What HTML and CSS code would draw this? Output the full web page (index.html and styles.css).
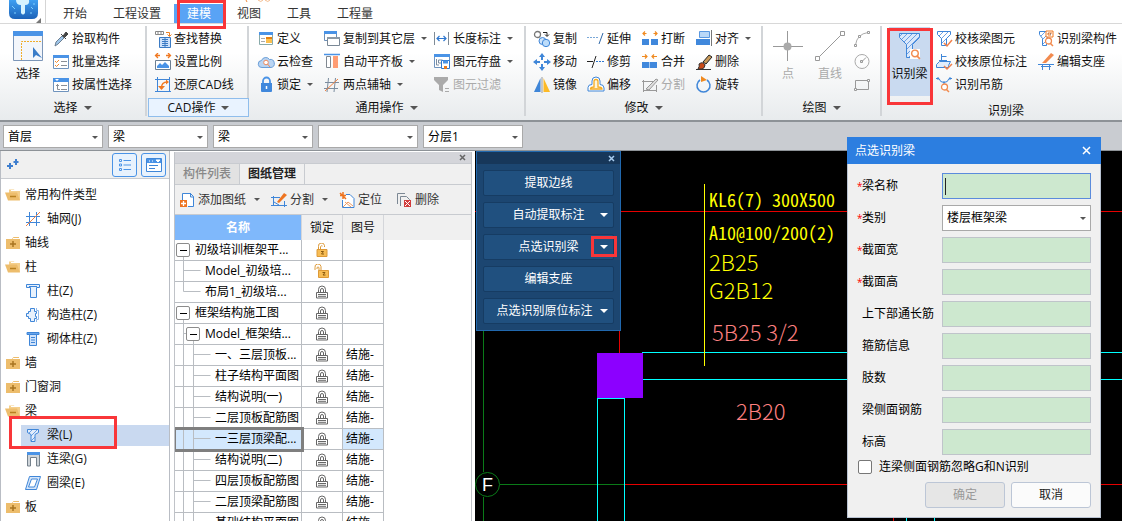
FILE: index.html
```html
<!DOCTYPE html>
<html lang="zh-CN">
<head>
<meta charset="utf-8">
<title>建模</title>
<link rel="stylesheet" href="styles.css">
</head>
<body>
<svg class="defs" aria-hidden="true">
  <defs>
    <linearGradient id="g-logo" x1="0" y1="0" x2="0" y2="1"><stop offset="0" stop-color="#3fa0f2"/><stop offset="1" stop-color="#1c62b8"/></linearGradient>
    <pattern id="hatch" width="5" height="5" patternUnits="userSpaceOnUse"><path d="M-1 6L6-1M-1 1L1-1M4 6L6 4" stroke="#4a8be0" stroke-width=".8"/></pattern>
    <symbol id="lock" viewBox="0 0 14 14"><path d="M3.500 7V4.500a3 3 0 0 1 7 0V7M5.500 7V5a1.500 1.500 0 0 1 3 0v2" fill="none" stroke="#666" stroke-width="1"/><path d="M1.500 7.500h11v5.500h-11zM3 9.500h8M3 11.300h8" fill="#fff" stroke="#666"/></symbol>
    <symbol id="unlock" viewBox="0 0 14 14"><path d="M3.500 7V3.500a3 3 0 0 1 6-1V4M5.500 7V4a1.300 1.300 0 0 1 2-1" fill="none" stroke="#dd9a38"/><path d="M2 6.500h10v7H2z" fill="#f7bd55" stroke="#dd9a38"/><path d="M6 8.500h2.500L6.500 11H9" fill="none" stroke="#8a5a10"/></symbol>
    <symbol id="unlock2" viewBox="0 0 18 14"><path d="M2 6V3.500a3 3 0 0 1 6-1V7M4 5V4a1 1 0 0 1 2 0v3" fill="none" stroke="#dd9a38"/><path d="M5.500 6.500h10v7h-10z" fill="#f7bd55" stroke="#dd9a38"/><path d="M9.500 8.500H12L10 11h2.500" fill="none" stroke="#8a5a10"/></symbol>
    <symbol id="open" viewBox="0 0 16 14"><path d="M4 1.500h5l1 1.500h5V12H4z" fill="#f4cf8c"/><path d="M6 2.500h9" stroke="#fff"/><path d="M0 4.500h12l3 8H3z" fill="#edbd6c"/><path d="M5 8.500h6" stroke="#b88020" stroke-width="1.500"/></symbol>
    <symbol id="shut" viewBox="0 0 16 14"><path d="M1 3h6l1.500-2H14v2h1v10H1z" fill="#edbd6c"/><path d="M8 2.500h6" stroke="#fff"/><path d="M5 8h6M8 5v6" stroke="#a87420" stroke-width="1.500"/></symbol>
    <symbol id="t-root" viewBox="0 0 20 20"><path d="M8.500 16v4" stroke="#b9bdc2"/><rect x="1.500" y="3.500" width="13" height="13" rx="1.500" fill="#fff" stroke="#8b8b8b"/><path d="M5 10.500h7" stroke="#000"/></symbol>
    <symbol id="t-tee" viewBox="0 0 30 20"><path d="M8.500 0v20M8.500 9.500h17" fill="none" stroke="#b9bdc2"/></symbol>
    <symbol id="t-end" viewBox="0 0 30 20"><path d="M8.500 0v9.500h17" fill="none" stroke="#b9bdc2"/></symbol>
    <symbol id="t-sub" viewBox="0 0 30 20"><path d="M8.500 0v20M8.500 9.500h3M18.500 16v4" fill="none" stroke="#b9bdc2"/><rect x="11.500" y="3.500" width="13" height="13" rx="1.500" fill="#fff" stroke="#8b8b8b"/><path d="M15 10.500h7" stroke="#000"/></symbol>
    <symbol id="t-deep" viewBox="0 0 40 20"><path d="M8.500 0v20M18.500 0v20M18.500 9.500h17" fill="none" stroke="#b9bdc2"/></symbol>
    <symbol id="mag" viewBox="0 0 10 10"><circle cx="4.500" cy="4" r="3" fill="#fff" stroke="#f28a4e" stroke-width="1.300"/><path d="M6.500 6.500L9 9" stroke="#f28a4e" stroke-width="1.500"/></symbol>
  </defs>
</svg>

<div class="app">
  <header class="menubar">
    <div class="brand">
      <svg width="48" height="23" viewBox="0 0 48 23"><path d="M9 0h29v13q0 6-6 6H15q-6 0-6-6z" fill="url(#g-logo)"/><path d="M16 0h13q1 5-4 5v8q-2 3-4 0V5q-5 0-5-5z" fill="#d5f3ff"/><path d="M12 6l3 3M31 7l2 2M14 13h2M30 13h2M34 3v2" stroke="#7fd0ff"/><path d="M41 18v5h-5z" fill="#777"/><path d="M45.500 0v23" stroke="#d5d5d5"/></svg>
    </div>
    <nav class="tabs">
      <button>开始</button><button>工程设置</button><button class="on">建模<span class="mark"></span></button><button>视图</button><button>工具</button><button>工程量</button>
    </nav>
    <svg class="specks" width="28" height="3" viewBox="0 0 28 3"><path d="M2 0l1 2" stroke="#f08a3c"/><path d="M14 0q3 3 5 0M21 0q3 3 5 0" fill="none" stroke="#f2bb8d"/></svg>
  </header>

  <div class="ribbon">
    <section class="group g-select">
      <div class="body">
        <button class="big"><svg width="30" height="30" viewBox="0 0 30 30"><path d="M.500.500h29v29H.500z" fill="#f3f6fb" stroke="#7c96b8"/><path d="M0 0h30v5H0z" fill="#4a93e6"/><path d="M8.500 29V10.500H28" fill="none" stroke="#f0ad2a" stroke-dasharray="2 1"/><path d="M20 16v11l3-3 6 3z" fill="#3a7cc8"/></svg><span>选择</span></button>
        <div class="col">
          <button><svg viewBox="0 0 18 18"><path d="M3 16l1-4 6-6 2 2-6 6z" fill="#9fc6ea" stroke="#6c7f92"/><path d="M9 4l5 5M11 6l3-4 2 2-3 3z" fill="#444" stroke="#444"/></svg>拾取构件</button>
          <button><svg viewBox="0 0 18 18"><path d="M1.500 2.500h15v13h-15z" fill="#fff" stroke="#6f93bd"/><path d="M1 2h16v3H1z" fill="#4a93e6"/><path d="M3 8l1.500 1.500L7 7M3 12l1.500 1.500L7 11" fill="none" stroke="#f28a2e"/><path d="M9 8.500h6M9 12.500h6" stroke="#8a8f96"/></svg>批量选择</button>
          <button><svg viewBox="0 0 18 18"><path d="M1.500 2.500h15v13h-15z" fill="#fff" stroke="#6f93bd"/><path d="M1 2h16v4H1z" fill="#4a93e6"/><path d="M3 3h4L5 5z" fill="#fff"/><path d="M5.500 8v5.500H8M9 9.500h6M9 13.500h6M4 9.500h3" fill="none" stroke="#8a8f96"/></svg>按属性选择</button>
        </div>
      </div>
      <button class="label">选择<i class="caret"></i></button>
    </section>

    <section class="group g-cad">
      <div class="body">
        <div class="col">
          <button><svg viewBox="0 0 18 18"><path d="M1.500 1.500h8v3h-8zM4 1.500v3M7 1.500v3" fill="none" stroke="#888"/><path d="M12 2.500h3.500V6M13.500 4.500l2 2 2-2" fill="none" stroke="#f08020"/><path d="M5.500 7.500h11v10h-11zM8 9.500h6M8 11.500h6M8 13.500h6M8 15.500h6M11 7v11" fill="#cfe2fa" stroke="#3b7bc4"/></svg>查找替换</button>
          <button><svg viewBox="0 0 18 18"><path d="M2 2.500h4M4 0L1.500 2.500 4 5M16 2.500h-4M14 0l2.500 2.500L14 5" fill="none" stroke="#f07820" stroke-width="1.300"/><path d="M1.500 7.500h15v9h-15z" fill="#fff" stroke="#6c7f92"/><path d="M3 15v-2l3-3 2 2 3-3 4 4v2z" fill="#4a93e6"/></svg>设置比例</button>
          <button><svg viewBox="0 0 18 18"><path d="M3.500 1v15M1 3.500h15M15.500 1v15M1 15.500h16" stroke="#3f86d8"/><path d="M7.500 12.500C7 8 10 6 13 6" fill="none" stroke="#f07820" stroke-width="1.500"/><path d="M4 10h7l-3.500 4zM12 3.500v5l3-2.500z" fill="#f07820"/></svg>还原CAD线</button>
        </div>
      </div>
      <button class="label on">CAD操作<i class="caret"></i></button>
    </section>

    <section class="group g-common">
      <div class="body">
        <div class="col">
          <button><svg viewBox="0 0 18 18"><path d="M2.500 2.500h13v12h-13z" fill="#fff" stroke="#8aa"/><path d="M2 2h14v3H2z" fill="#4a93e6"/><path d="M4 8.500h4M4 11.500h4" stroke="#aaa"/><path d="M9 7h6v2H9z" fill="#e58010"/><path d="M9 9h6v4H9z" fill="#fbc04e"/></svg>定义</button>
          <button><svg viewBox="0 0 18 18"><path d="M5 14.500a3.500 3.500 0 0 1-.5-7 4.500 4.500 0 0 1 8-1 4 4 0 0 1 1.500 8z" fill="#b9d4f2" stroke="#6b9fd8"/><circle cx="9" cy="9.500" r="2.300" fill="#fff" stroke="#ee8a5c"/><path d="M10.500 11l2.500 3" stroke="#ee8a5c"/></svg>云检查</button>
          <button><svg viewBox="0 0 18 18"><path d="M6 8V5a3.500 3.500 0 0 1 7 0v3" fill="none" stroke="#4a93e6" stroke-width="1.800"/><path d="M4 7h11v8q0 1-1 1H5q-1 0-1-1z" fill="#4088dc"/><path d="M9.500 10v3" stroke="#fff" stroke-width="1.500"/></svg>锁定<i class="caret"></i></button>
        </div>
        <div class="col">
          <button><svg viewBox="0 0 18 18"><path d="M1.500 1.500h12v9h-12z" fill="#fff" stroke="#6c8fb8"/><path d="M1 1h13v3H1z" fill="#4a93e6"/><path d="M4.500 7.500h12v8h-12z" fill="#fff" stroke="#7a8896"/><path d="M4 7h13v2H4z" fill="#8d9aa6"/></svg>复制到其它层<i class="caret"></i></button>
          <button><svg viewBox="0 0 18 18"><path d="M1 1.500h16" stroke="#4a93e6" stroke-width="1.500"/><path d="M3.500 3.500h4v11h-4z" fill="#fff" stroke="#808890"/><path d="M10 3h5v12h-5z" fill="#ff9d74"/></svg>自动平齐板<i class="caret"></i></button>
          <button><svg viewBox="0 0 18 18"><path d="M5.500 2L4 16M12.500 2L11 16M2 6.500h14M1 12.500h14" stroke="#7b8d9f"/><path d="M2 15L15 3" stroke="#f08040"/></svg>两点辅轴<i class="caret"></i></button>
        </div>
        <div class="col">
          <button><svg viewBox="0 0 18 18"><path d="M1.500 2v13M15.500 2v13" stroke="#7f8b96"/><path d="M4 8.500h9M6.500 6L4 8.500 6.500 11M10.500 6l2.500 2.500-2.500 2.500" fill="none" stroke="#2f78d0" stroke-width="1.200"/></svg>长度标注<i class="caret"></i></button>
          <button><svg viewBox="0 0 18 18"><path d="M1.500 1.500h15v13h-15z" fill="#fff" stroke="#6f93bd"/><path d="M1 1h16v3H1z" fill="#4a93e6"/><path d="M3.500 6v6H6M5.500 7h4v3h-4z" fill="none" stroke="#7b8da0"/><path d="M8.500 7.500h8v8h-8z" fill="#fff" stroke="#2f78d0"/><path d="M10 7.500h5v3h-5z" fill="#4a93e6"/><path d="M11 13h3v3h-3z" fill="#e87a20"/></svg>图元存盘<i class="caret"></i></button>
          <button disabled><svg viewBox="0 0 18 18"><path d="M1 1h14v3l-5 5v7l-4-2V9L1 4z" fill="#aaa"/><path d="M12 12.500h4M12 15.500h4" stroke="#aaa"/></svg>图元过滤</button>
        </div>
      </div>
      <button class="label">通用操作<i class="caret"></i></button>
    </section>

    <section class="group g-modify">
      <div class="body">
        <div class="col">
          <button><svg viewBox="0 0 18 18"><circle cx="4.500" cy="4.500" r="3" fill="none" stroke="#777" stroke-width="1.300"/><path d="M10 2.500h4V6M12 4.500l2 2 2-2" fill="none" stroke="#222"/><circle cx="9.500" cy="11" r="3.500" fill="#cfe4fa" stroke="#3f86d8"/><circle cx="13" cy="13" r="3.700" fill="#bcdcfa" stroke="#3f86d8"/></svg>复制</button>
          <button><svg viewBox="0 0 18 18"><path d="M9 0l3 4H6zM9 18l3-4H6zM0 9l4-3v6zM18 9l-4-3v6z" fill="#3f86d8"/><path d="M9 3v4M9 11v4M3 9h4M11 9h4" stroke="#3f86d8" stroke-width="2"/></svg>移动</button>
          <button><svg viewBox="0 0 18 18"><path d="M7.500 2v14H1z" fill="#3f86d8"/><path d="M10.500 2v14H17z" fill="#fdba26"/><path d="M9 1v16" stroke="#999"/></svg>镜像</button>
        </div>
        <div class="col">
          <button><svg viewBox="0 0 18 18"><path d="M0 7.500h11" stroke="#7aa8d8" stroke-dasharray="2 1"/><path d="M12 14l4-11" stroke="#2f68a8"/></svg>延伸</button>
          <button><svg viewBox="0 0 18 18"><path d="M0 8.500h6" stroke="#222"/><path d="M9 8.500h8" stroke="#2f78d0" stroke-dasharray="2 1"/><path d="M5 15L9 3" stroke="#222"/></svg>修剪</button>
          <button><svg viewBox="0 0 18 18"><path d="M1 11.500q0-3 4-3V5a4 4 0 0 1 8 0v3.500q4 0 4 3.500v3H1z" fill="#fff" stroke="#3f86d8"/><path d="M3.500 13q0-2 3.500-2V5.500a2 2 0 0 1 4 0V11q4 0 4 2z" fill="#fff5d8" stroke="#f4ab20" stroke-width="1.300"/></svg>偏移</button>
        </div>
        <div class="col">
          <button><svg viewBox="0 0 18 18"><path d="M1.500 3.500h4M4 1.500l-2 2 2 2M16.500 3.500h-4M14 1.500l2 2-2 2" fill="none" stroke="#f08a20" stroke-width="1.200"/><path d="M1 9h7v6H1zM10 9h7v6h-7z" fill="#4088dc"/></svg>打断</button>
          <button><svg viewBox="0 0 18 18"><path d="M1 3.500h5M4 1.500l2 2-2 2M16 3.500h-5M13 1.500l-2 2 2 2" fill="none" stroke="#f08a20" stroke-width="1.200"/><path d="M1 9h15v6H1z" fill="#4088dc"/><path d="M8.500 9v6" stroke="#a9cbf2"/></svg>合并</button>
          <button disabled><svg viewBox="0 0 18 18"><path d="M3 5.500h9M3 14.500h12M2.500 4v12M15.500 9v7M1 5.500h4M5 13l10-10 2 1-9 10z" fill="#ddd" stroke="#999"/></svg>分割</button>
        </div>
        <div class="col">
          <button><svg viewBox="0 0 18 18"><path d="M4.500 1.500h10v6h-10z" fill="#b9d8f8" stroke="#5a98e0"/><path d="M1 9h14v6H1z" fill="#4088dc"/><path d="M16.500 0v16" stroke="#777"/></svg>对齐<i class="caret"></i></button>
          <button><svg viewBox="0 0 18 18"><path d="M8 9l6-7 3 2-6 7z" fill="#c99a5a" stroke="#222"/><path d="M4 11q4-3 6 1 0 3-3 4H3q2-3 1-5z" fill="#c84a18" stroke="#333"/><path d="M1 16.500h15" stroke="#333"/></svg>删除</button>
          <button><svg viewBox="0 0 18 18"><path d="M12 4a6.500 6.500 0 1 1-7 0" fill="none" stroke="#3f86d8" stroke-width="1.500"/><path d="M6 0v6l6-2z" fill="#f08a20"/></svg>旋转</button>
        </div>
      </div>
      <button class="label">修改<i class="caret"></i></button>
    </section>

    <section class="group g-draw">
      <div class="body">
        <button class="big" disabled><svg width="30" height="30" viewBox="0 0 30 30"><path d="M0 15.500h30M14.500 0v30" stroke="#999"/><circle cx="14.500" cy="15.500" r="4" fill="#aaa"/></svg><span>点</span></button>
        <button class="big" disabled><svg width="30" height="30" viewBox="0 0 30 30"><path d="M3 27L27 3" stroke="#999"/><path d="M.500 25.500h4v4h-4zM25.500.500h4v4h-4z" fill="#fff" stroke="#999"/></svg><span>直线</span></button>
        <div class="col">
          <button disabled aria-label="弧"><svg viewBox="0 0 18 18"><path d="M2.500 15Q4 4 15 2.500" fill="none" stroke="#aaa"/><path d="M1.500 14.500h2v2h-2zM5.500 5.500h2v2h-2zM14.500 1.500h2v2h-2z" fill="#fff" stroke="#999"/></svg></button>
          <button disabled aria-label="圆"><svg viewBox="0 0 18 18"><circle cx="9" cy="8.500" r="7" fill="none" stroke="#aaa"/><path d="M9 8.500l4-4M7.500 7.500h2v2h-2z" fill="#fff" stroke="#999"/></svg></button>
          <button disabled aria-label="矩形"><svg viewBox="0 0 18 18"><path d="M2.500 4.500h13v9h-13z" fill="none" stroke="#999"/><path d="M1.500 12.500h2v2h-2zM14.500 3.500h2v2h-2z" fill="#fff" stroke="#999"/></svg></button>
        </div>
      </div>
      <button class="label">绘图<i class="caret"></i></button>
    </section>

    <section class="group g-identify">
      <div class="body">
        <button class="big hot"><svg width="30" height="30" viewBox="0 0 30 30"><path d="M4.500 2.500h20v4l-7 7v13h-6v-13l-7-7z" fill="#dbe8fa"/><path d="M4.500 2.500h20v4l-7 7v13h-6v-13l-7-7z" fill="url(#hatch)" stroke="#3f86d8"/><path d="M15 18h10v10H15z" fill="#fff"/><use href="#mag" x="15" y="18" width="11" height="11"/></svg><span>识别梁</span><span class="mark"></span></button>
        <div class="col">
          <button><svg viewBox="0 0 18 18"><path d="M2.500 1.500h13v3l-4 4v7h-5v-7l-4-4z" fill="url(#hatch)" stroke="#3f86d8"/><path d="M9 13l3 3 5-6" fill="none" stroke="#f2804a" stroke-width="1.500"/></svg>校核梁图元</button>
          <button><svg viewBox="0 0 18 18"><path d="M6.500 1v7M6.500 3.500h5M4 7.500h8M1.500 11.500l3-3h11l-2 4v2h-12z" fill="#e2edfb" stroke="#3f86d8"/><path d="M9 13l3 3 5-5" fill="none" stroke="#f2804a" stroke-width="1.500"/></svg>校核原位标注</button>
          <button><svg viewBox="0 0 18 18"><path d="M1 2.500h3q1 4 5 4t5-4h3M3 1v3M9 5v3M15 1v3" fill="none" stroke="#3f86d8"/><use href="#mag" x="5" y="7" width="10" height="10"/></svg>识别吊筋</button>
        </div>
        <div class="col">
          <button><svg viewBox="0 0 18 18"><path d="M2.500 1.500h11v3l-4 4v7h-4v-7l-3-4z" fill="url(#hatch)" stroke="#3f86d8"/><path d="M9 1h7v6H9zM15 3h-4v2h3" fill="#fff" stroke="#f07820"/><use href="#mag" x="7" y="7" width="10" height="10"/></svg>识别梁构件</button>
          <button><svg viewBox="0 0 18 18"><path d="M6 9l8-9 3 2-8 8H5z" fill="#f28a4e"/><path d="M1 11.500h16M5.500 11v6M12.500 11v6M4 13.500h10" stroke="#3f86d8"/></svg>编辑支座</button>
        </div>
      </div>
      <div class="label">识别梁</div>
    </section>
  </div>

  <div class="filters">
    <div class="pick"><select aria-label="楼层"><option>首层</option></select></div>
    <div class="pick"><select aria-label="构件大类"><option>梁</option></select></div>
    <div class="pick"><select aria-label="构件类型"><option>梁</option></select></div>
    <div class="pick"><select aria-label="构件名称"><option></option></select></div>
    <div class="pick"><select aria-label="分层"><option>分层1</option></select></div>
  </div>

  <main class="work">
    <aside class="nav">
      <div class="navbar">
        <button class="plus" aria-label="展开"><svg width="14" height="14" viewBox="0 0 14 14"><path d="M1 8h6M4 5v6M7.500 4h5M10 1v6" stroke="#3f7fcf" stroke-width="2"/></svg></button>
        <button class="view" aria-label="列表"><svg width="14" height="14" viewBox="0 0 14 14"><path d="M1.500 1.500h2v2h-2zM1.500 6h2v2h-2zM1.500 10.500h2v2h-2z" fill="none" stroke="#4a93e6"/><path d="M5.500 2.500H13M5.500 7H13M5.500 11.500H13" stroke="#4a93e6"/></svg></button>
        <button class="view" aria-label="窗口"><svg width="16" height="14" viewBox="0 0 16 14"><path d="M.500.500h15v13H.500z" fill="#fff" stroke="#3f86d8"/><path d="M1 1h14v4H1z" fill="#4a93e6"/><path d="M3 3h1M6 3h1M10 2h4l-2 2z" stroke="#fff" fill="#fff"/><path d="M3 7.500h9M3 10.500h6" stroke="#3f86d8"/></svg></button>
      </div>
      <ul class="tree">
        <li><svg><use href="#open"/></svg>常用构件类型</li>
        <li class="leaf"><svg viewBox="0 0 16 16"><path d="M4.500 1v14M11.500 1v14M1 5.500h14M1 11.500h14" stroke="#3f86d8"/><path d="M1 15L15 1" stroke="#f08040"/></svg>轴网(J)</li>
        <li><svg><use href="#shut"/></svg>轴线</li>
        <li><svg><use href="#open"/></svg>柱</li>
        <li class="leaf"><svg viewBox="0 0 16 16"><path d="M1.500 1.500h13v3h-3v10h-6v-10h-4zM4 3.500h8" fill="#e8f1fc" stroke="#3f86d8"/></svg>柱(Z)</li>
        <li class="leaf"><svg viewBox="0 0 16 16"><path d="M5.500 1.500h4v3h2v2h-1v3h1v2h-2v3h-4v-3h-2v-2h-2v-3h2v-2h2z" fill="#e8f1fc" stroke="#3f86d8"/><path d="M11.500 1v2.500h2v9h-2V15" fill="none" stroke="#8fb8ea"/></svg>构造柱(Z)</li>
        <li class="leaf"><svg viewBox="0 0 16 16"><path d="M2 1.500h12v2H2z" fill="#6aa5ea" stroke="#3f86d8"/><path d="M4.500 3.500h7v11h-7zM6 6.500h4M6 9h4M6 11.500h4" fill="#cfe2fa" stroke="#3f86d8"/></svg>砌体柱(Z)</li>
        <li><svg><use href="#shut"/></svg>墙</li>
        <li><svg><use href="#shut"/></svg>门窗洞</li>
        <li><svg><use href="#open"/></svg>梁</li>
        <li class="leaf on"><svg viewBox="0 0 16 16"><path d="M2.500 2.500h11v3l-3.500 2v7H6v-7l-3.500-2z" fill="#e2edfb"/><path d="M2.500 2.500h11v3l-3.500 2v7H6v-7l-3.500-2z" fill="url(#hatch)" stroke="#3f86d8"/></svg>梁(L)<span class="mark"></span></li>
        <li class="leaf"><svg viewBox="0 0 16 16"><path d="M2.500 1.500h12V15h-3V6.500h-6V15h-3z" fill="#cfd5da" stroke="#75818c"/><path d="M2 1h13v3H2z" fill="#4a93e6"/></svg>连梁(G)</li>
        <li class="leaf"><svg viewBox="0 0 16 16"><path d="M4.500 1.500h11l-4 13h-11zM6.500 4h6l-3 8h-6z" fill="#d6e6fa" fill-rule="evenodd" stroke="#3f86d8"/></svg>圈梁(E)</li>
        <li><svg><use href="#shut"/></svg>板</li>
      </ul>
    </aside>

    <section class="sheets">
      <div class="grip"><button class="close" aria-label="关闭"><svg width="7" height="7" viewBox="0 0 7 7"><path d="M1 1l5 5M6 1L1 6" stroke="#666" stroke-width="1.500"/></svg></button></div>
      <div class="sheettabs"><button>构件列表</button><button class="on">图纸管理</button></div>
      <div class="tools">
        <button><svg viewBox="0 0 16 16"><path d="M3.500 8V1.500h8l3 3v10H9M11.500 1v4h3" fill="#fff" stroke="#3f86d8"/><path d="M1 8h7v7H1z" fill="#ee7420"/><path d="M2 11.500h5M4.500 9v5" stroke="#fff" stroke-width="1.300"/></svg>添加图纸<i class="caret"></i></button>
        <button><svg viewBox="0 0 16 16"><path d="M0 5.500h9M2.500 4v10M0 13.500h16M13.500 9v6M3 10l5 3" fill="none" stroke="#3f86d8"/><path d="M6 10l7-9 3 2-8 8z" fill="#ee7420"/></svg>分割<i class="caret"></i></button>
        <button><svg viewBox="0 0 16 16"><path d="M7 2.500h4l4 4v9H3.500V8" fill="#fff" stroke="#3f86d8"/><path d="M1 3.500h6M4 0v7M1 1l6 6" stroke="#ee7420" stroke-width="1.500"/><path d="M4 15l5-5 5 4M6 10l6 5" fill="none" stroke="#ee9a60"/></svg>定位</button>
        <button><svg viewBox="0 0 16 16"><path d="M1.500 12V1.500H9M4.500 14V4.500h6l3 3V9" fill="none" stroke="#7c8894"/><path d="M8 8h7v7H8z" fill="#d23c3c"/><path d="M9 9l5 5M14 9l-5 5" stroke="#fff"/></svg>删除</button>
      </div>
      <div class="tablewrap">
        <table>
          <colgroup><col class="c1"><col class="c2"><col class="c2"></colgroup>
          <thead><tr><th class="sort">名称</th><th>锁定</th><th>图号</th></tr></thead>
          <tbody>
            <tr><td><div><svg class="w20"><use href="#t-root"/></svg>初级培训框架平...</div></td><td><svg class="lk"><use href="#unlock"/></svg></td><td></td></tr>
            <tr><td><div><svg class="w30"><use href="#t-tee"/></svg>Model_初级培...</div></td><td><svg class="lk"><use href="#unlock2"/></svg></td><td></td></tr>
            <tr><td><div><svg class="w30"><use href="#t-end"/></svg>布局1_初级培...</div></td><td><svg class="lk"><use href="#lock"/></svg></td><td></td></tr>
            <tr><td><div><svg class="w20"><use href="#t-root"/></svg>框架结构施工图</div></td><td><svg class="lk"><use href="#lock"/></svg></td><td></td></tr>
            <tr><td><div><svg class="w30"><use href="#t-sub"/></svg>Model_框架结...</div></td><td><svg class="lk"><use href="#lock"/></svg></td><td></td></tr>
            <tr><td><div><svg class="w40"><use href="#t-deep"/></svg>一、三层顶板...</div></td><td><svg class="lk"><use href="#lock"/></svg></td><td>结施-</td></tr>
            <tr><td><div><svg class="w40"><use href="#t-deep"/></svg>柱子结构平面图</div></td><td><svg class="lk"><use href="#lock"/></svg></td><td>结施-</td></tr>
            <tr><td><div><svg class="w40"><use href="#t-deep"/></svg>结构说明(一)</div></td><td><svg class="lk"><use href="#lock"/></svg></td><td>结施-</td></tr>
            <tr><td><div><svg class="w40"><use href="#t-deep"/></svg>二层顶板配筋图</div></td><td><svg class="lk"><use href="#lock"/></svg></td><td>结施-</td></tr>
            <tr class="on"><td><div><svg class="w40"><use href="#t-deep"/></svg>一三层顶梁配...</div></td><td><svg class="lk"><use href="#lock"/></svg></td><td>结施-</td></tr>
            <tr><td><div><svg class="w40"><use href="#t-deep"/></svg>结构说明(二)</div></td><td><svg class="lk"><use href="#lock"/></svg></td><td>结施-</td></tr>
            <tr><td><div><svg class="w40"><use href="#t-deep"/></svg>四层顶板配筋图</div></td><td><svg class="lk"><use href="#lock"/></svg></td><td>结施-</td></tr>
            <tr><td><div><svg class="w40"><use href="#t-deep"/></svg>二层顶梁配筋图</div></td><td><svg class="lk"><use href="#lock"/></svg></td><td>结施-</td></tr>
            <tr><td><div><svg class="w40"><use href="#t-deep"/></svg>基础结构平面图</div></td><td><svg class="lk"><use href="#lock"/></svg></td><td>结施-</td></tr>
          </tbody>
        </table>
      </div>
    </section>

    <section class="canvas">
      <svg class="drawing" width="1400" height="800" viewBox="0 0 1400 800" fill="none" shape-rendering="crispEdges">
        <path d="M8.500 180v141M8.500 346v400" stroke="#0a7a18"/>
        <path d="M0 60.500h1400M144.500 60v142M149 333.500h1251M418.500 350v450" stroke="#e60000"/>
        <path d="M25 333.500h125" stroke="#0a7a18"/>
        <path d="M1400 201.500H167.500v27H1400M122.500 800V247.500h27V800M431.500 360v440M459.500 360v440" stroke="#0ff"/>
        <path d="M122 202h46v45h-46z" fill="#8c00ff"/>
        <path d="M229.500 33v182" stroke="#ff0"/>
        <circle cx="12.500" cy="333.500" r="12" stroke="#0a7a18" shape-rendering="auto"/>
        <text class="axis" x="7" y="340">F</text>
        <g class="cad">
          <text class="mono" x="234" y="56">KL6(7) 300X500</text>
          <text class="mono" x="234" y="89">A10@100/200(2)</text>
          <text x="234" y="120">2B25</text>
          <text x="234" y="148">G2B12</text>
          <text class="pink" x="237" y="190">5B25 3/2</text>
          <text class="pink" x="261" y="269">2B20</text>
        </g>
      </svg>
      <div class="palette">
        <div class="pbar"><button class="close" aria-label="关闭"><svg width="7" height="7" viewBox="0 0 7 7"><path d="M1 1l5 5M6 1L1 6" stroke="#a9cdf0" stroke-width="1.500"/></svg></button></div>
        <div class="pbody">
          <button><span>提取边线</span></button>
          <button><span>自动提取标注</span><i class="caret"></i></button>
          <button><span>点选识别梁</span><i class="caret"></i><b class="mark"></b></button>
          <button><span>编辑支座</span></button>
          <button class="long"><span>点选识别原位标注</span><i class="caret"></i></button>
        </div>
      </div>
    </section>
  </main>

  <form class="dialog">
    <div class="dhead"><span>点选识别梁</span><button type="button" class="close" aria-label="关闭"><svg width="9" height="9" viewBox="0 0 9 9"><path d="M1 1l7 7M8 1L1 8" stroke="#fff" stroke-width="1.500"/></svg></button></div>
    <div class="fields">
      <label for="f1"><em>*</em>梁名称</label><div class="focus"><input id="f1" type="text"></div>
      <label for="f2"><em>*</em>类别</label><div class="pick"><select id="f2"><option>楼层框架梁</option></select></div>
      <label for="f3"><em>*</em>截面宽</label><input id="f3" type="text">
      <label for="f4"><em>*</em>截面高</label><input id="f4" type="text">
      <label for="f5"><em></em>上下部通长筋</label><input id="f5" type="text">
      <label for="f6"><em></em>箍筋信息</label><input id="f6" type="text">
      <label for="f7"><em></em>肢数</label><input id="f7" type="text">
      <label for="f8"><em></em>梁侧面钢筋</label><input id="f8" type="text">
      <label for="f9"><em></em>标高</label><input id="f9" type="text">
    </div>
    <label class="check"><input type="checkbox">连梁侧面钢筋忽略G和N识别</label>
    <div class="actions"><button type="button" disabled>确定</button><button type="button">取消</button></div>
  </form>
</div>
</body>
</html>
```
FILE: styles.css
```css
* { box-sizing: border-box; }
html, body { height: 100%; }
body {
  margin: 0;
  overflow: hidden;
  font: 12px/18px "Open Sans", "Noto Sans CJK SC", sans-serif;
  color: #111;
  background: #fff;
}
button, input, select { font: inherit; color: inherit; margin: 0; }
button { border: 0; padding: 0; background: none; white-space: nowrap; }
svg { display: block; flex: none; }
.defs { position: absolute; width: 0; height: 0; }
.app { position: relative; height: 100%; display: flex; flex-direction: column; }

.caret {
  display: inline-block;
  border: 4px solid transparent;
  border-top-color: #555;
  border-bottom: 0;
}
.mark { position: absolute; border: 3px solid #f93639; pointer-events: none; }

/* menu bar */
.menubar { position: relative; flex: none; display: flex; height: 24px; border-bottom: 1px solid #d8d8d8; }
.brand { width: 50px; }
.tabs { display: flex; align-items: flex-end; }
.tabs button { position: relative; height: 19px; padding: 1px 13px 0; color: #333; }
.tabs .on { color: #fff; background: #59a3f5; }
.tabs .mark { z-index: 2; inset: -4px -2px -6px 3px; }
.specks { position: absolute; top: 0; left: 244px; }

/* ribbon */
.ribbon {
  flex: none;
  display: flex;
  height: 98px;
  padding: 2px 0 4px;
  border-bottom: 2px solid #8d9297;
  background: linear-gradient(#fff 30%, #e8ebed);
}
.group { flex: none; display: flex; flex-direction: column; border-right: 2px solid #d2d5d8; padding: 1px 0 0; }
.body { display: flex; height: 70px; }
.group .label {
  display: flex;
  align-items: center;
  justify-content: center;
  gap: 6px;
  height: 19px;
  margin-top: 2px;
  border: 1px solid transparent;
}
.group .label.on { margin-left: 1px; margin-right: -2px; z-index: 1; background: #e9f3ff; border-color: #8fbdec; }
.col { display: flex; flex-direction: column; }
.col button { display: flex; align-items: center; gap: 2px; height: 23px; }
.col svg { width: 18px; height: 18px; }
.col .caret { margin-left: 4px; border-width: 3px; border-bottom: 0; }
.ribbon button:disabled { color: #aaa; }
.big { display: flex; flex-direction: column; align-items: center; gap: 4px; padding-top: 4px; width: 42px; height: 64px; }
.g-select { width: 147px; }
.g-select .body { padding-left: 1px; }
.g-select .big { width: 51px; padding-left: 3px; }
.g-cad { width: 102px; }
.g-cad .body { padding-left: 7px; }
.g-common { width: 277px; }
.g-common .body { display: grid; grid-template-columns: 66px 110px 1fr; padding-left: 8px; }
.g-modify { width: 237px; }
.g-modify .body { display: grid; grid-template-columns: repeat(4, 54px); padding-left: 7px; }
.g-draw { width: 119px; }
.g-draw .body { padding-left: 4px; }
.g-draw .col { margin-left: 2px; }
.g-identify { flex: 1; border-right: 0; }
.g-identify .body { padding-left: 7px; }
.g-identify .hot { position: relative; width: 41px; height: 70px; background: linear-gradient(#c9daf0, #c9daf0) 0 0 / 100% 69px no-repeat; }
.g-identify .hot .mark { inset: 1px -3px -8px -2px; }
.g-identify .col { margin-left: 5px; width: 98px; }
.g-identify .col + .col { margin-left: 4px; }
.g-identify .label { width: 248px; padding-top: 4px; }

/* filter row */
.filters { flex: none; display: flex; gap: 5px; height: 29px; padding: 3px; background: #c9ccd1; border-bottom: 1px solid #8d9297; }
.filters .pick { width: 100px; }
.pick { position: relative; height: 23px; }
.pick select { appearance: none; width: 100%; height: 100%; padding: 0 16px 0 4px; border: 1px solid #a9a9a9; border-radius: 0; background: #fff; color: #000; }
.pick::after { content: ""; position: absolute; right: 5px; top: 50%; margin-top: -1px; border: 3px solid transparent; border-top-color: #555; border-bottom: 0; }

/* work area */
.work { flex: 1; min-height: 0; display: flex; }
.nav { flex: none; width: 170px; overflow: hidden; border: 1px solid #b9bdc4; border-width: 0 1px; }
.navbar { display: flex; align-items: center; gap: 4px; height: 28px; padding: 0 3px 0 5px; background: #f0f0f0; border-bottom: 1px solid #c8cbd0; }
.plus { margin-right: auto; }
.view { display: flex; align-items: center; justify-content: center; width: 25px; height: 24px; border: 1px solid #4a93e6; border-radius: 3px; background: #e8f2fd; }
.tree { list-style: none; margin: 0; padding: 4px 0 0; }
.tree li { position: relative; display: flex; align-items: center; gap: 4px; height: 24px; padding-left: 4px; }
.tree svg { width: 16px; height: 16px; }
.tree .leaf { margin-left: 20px; gap: 6px; }
.tree .on { background: linear-gradient(#c9d9f0, #c9d9f0) 0 50% / 100% 21px no-repeat; }
.tree .mark { z-index: 1; inset: -7px 52px -2px -12px; }

.sheets { flex: none; width: 298px; margin: 1px 3px 0 4px; border: 1px solid #c0c3c8; border-width: 0 1px; overflow: hidden; display: flex; flex-direction: column; }
.grip { flex: none; display: flex; align-items: center; justify-content: flex-end; height: 11px; padding-right: 5px; background: #d4d5da; }
.sheettabs { flex: none; display: flex; height: 22px; background: #f0f0f0; border-top: 1px solid #c8cbd0; border-bottom: 1px solid #c8cbd0; }
.sheettabs button { padding: 0 8px; background: #e2e2e2; color: #888; border-right: 1px solid #c8cbd0; font-weight: 500; }
.sheettabs .on { background: #f0f0f0; color: #222; font-weight: 700; }
.tools { flex: none; display: flex; height: 30px; padding-left: 4px; gap: 11px; background: #f0f0f0; color: #333; border-bottom: 1px solid #c8cbd0; }
.tools button { display: flex; align-items: center; gap: 3px; }
.tools button:last-child { margin-left: 3px; }
.tools svg { width: 16px; height: 16px; }
.tools .caret { margin-left: 5px; border-width: 3px; border-bottom: 0; }
.tablewrap { flex: 1; overflow: hidden; background: linear-gradient(#f0f0f0, #f0f0f0) 0 0 / 100% 25px no-repeat; }
table { table-layout: fixed; width: 209px; border-collapse: separate; border-spacing: 0; }
.c1 { width: 127px; }
.c2 { width: 41px; }
th { height: 25px; padding: 0; font-weight: 400; background: #f0f0f0; border-right: 1px solid #d4d6da; }
th.sort { background: #7fb8fb; color: #fff; font-weight: 700; }
td { height: 21px; padding: 0; border: 1px solid #b9bdc2; border-width: 0 1px 1px 0; background: #fff; white-space: nowrap; overflow: hidden; color: #000; }
td:last-child { padding-left: 3px; }
td div { display: flex; align-items: center; height: 20px; }
td svg { height: 20px; }
td .w20 { width: 20px; }
td .w30 { width: 30px; }
td .w40 { width: 40px; }
td .lk { width: 18px; height: 14px; margin: 0 auto; }
.on td:first-child { outline: 3px solid #7f7f7f; outline-offset: -1px; background: #d3e8fd; }
.on td:last-child { background: #d3e8fd; }

/* drawing area */
.canvas { position: relative; flex: 1; min-width: 0; overflow: hidden; background: #000; }
.drawing { position: absolute; left: 0; top: 0; }
.cad { font: 300 22px "Noto Sans CJK SC", sans-serif; fill: #ff0; }
.cad .mono { font: 300 18px "Noto Sans Mono CJK SC", "Noto Sans CJK SC", sans-serif; }
.cad .pink { fill: #ff8080; }
.axis { font: 18px "Liberation Sans", sans-serif; fill: #fff; }
.palette { position: absolute; left: 1px; top: 0; width: 145px; border: 1px solid #2168ae; background: #1c4671; }
.pbar { display: flex; align-items: center; justify-content: flex-end; height: 12px; padding-right: 5px; background: #17375a; }
.pbody { display: grid; gap: 6px; padding: 6px; }
.pbody button { position: relative; display: grid; grid-template-columns: 16px 1fr 16px; align-items: center; height: 26px; border: 1px solid #163c63; border-radius: 2px; background: #20507f; color: #fff; }
.pbody .long { grid-template-columns: 8px 1fr 16px; }
.pbody span { grid-column: 2; text-align: center; }
.pbody .caret { justify-self: start; border-top-color: #fff; margin-left: 3px; }
.pbody .mark { inset: 1px -4px 2px 107px; }

/* dialog */
.dialog { position: absolute; top: 137px; right: 21px; width: 254px; padding-bottom: 9px; border: 1px solid #b9c3d2; border-top: 0; background: #f0f0f0; }
.dhead { display: flex; align-items: center; justify-content: space-between; height: 27px; margin: 0 -1px; padding: 0 10px 0 8px; background: #2c7ee0; color: #fff; }
.fields { display: grid; grid-template-columns: 85px 1fr; align-items: center; gap: 6px 0; padding: 9px 9px 0; color: #000; }
.fields em { display: inline-block; width: 5px; color: #f00; font-style: normal; font-size: 10px; }
.fields input { width: 100%; height: 26px; padding: 0 4px; border: 1px solid #bfc4ca; background: #cde8cf; }
.fields .pick { height: 26px; }
.focus { display: flex; position: relative; }
.fields .focus input { border-color: #5b8bdc; }
.focus::after { content: ""; position: absolute; left: 3px; top: 5px; width: 1px; height: 17px; background: #222; }
.check { display: flex; align-items: center; gap: 7px; margin: 3px 10px; color: #000; }
.check input { appearance: none; width: 14px; height: 14px; border: 1px solid #777; border-radius: 2px; background: #fff; }
.actions { display: flex; justify-content: flex-end; gap: 6px; padding: 3px 9px 0; }
.actions button { width: 80px; height: 26px; border: 1px solid #bcc6d6; border-radius: 3px; background: #fbfbfb; color: #222; }
.actions button:disabled { background: #e6e6e6; color: #999; }
```
